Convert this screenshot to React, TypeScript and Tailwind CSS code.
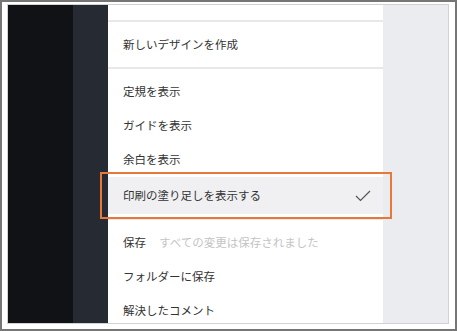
import React from "react";

function Divider() {
  return <div className="h-[2px] shrink-0 bg-[#e8e8ea]" />;
}

function Item({ label, note }: { label: string; note?: string }) {
  return (
    <div className="h-[34px] shrink-0 flex items-center pl-[15px] text-[11.5px] text-[#333]">
      <span>{label}</span>
      {note && <span className="ml-[13px] text-[#c4c4c4]">{note}</span>}
    </div>
  );
}

export default function App() {
  return (
    <div
      className="relative w-[457px] h-[331px] border-2 border-[#767676] bg-white pl-[5px] pt-[2px] pr-[6px] pb-[5px]"
      style={{ fontFamily: '"Noto Sans CJK JP", "Noto Sans", sans-serif' }}
    >
      <div className="flex h-full border border-[#d2d2d4] overflow-hidden">
        {/* Dark side bars */}
        <div className="w-[65px] shrink-0 bg-[#101216]" />
        <div className="w-[35px] shrink-0 bg-[#262b33]" />

        {/* Menu */}
        <div className="w-[275px] shrink-0 bg-white flex flex-col">
          <div className="h-[15px] shrink-0" />
          <Divider />
          <div className="h-[45px] shrink-0 flex items-center pl-[15px] text-[11.5px] text-[#333]">
            新しいデザインを作成
          </div>
          <Divider />
          <div className="h-[6px] shrink-0" />
          <Item label="定規を表示" />
          <Item label="ガイドを表示" />
          <Item label="余白を表示" />
          <div className="h-[37px] shrink-0 flex items-center justify-between pl-[15px] pr-[12px] bg-[#f0f0f2] text-[11.5px] text-[#333]">
            <span>印刷の塗り足しを表示する</span>
            <svg width="16" height="12" viewBox="0 0 16 12" fill="none">
              <polyline
                points="1,6 5.5,10.5 15,1"
                stroke="#555"
                strokeWidth="1.2"
              />
            </svg>
          </div>
          <div className="h-[4px] shrink-0" />
          <Divider />
          <div className="h-[6px] shrink-0" />
          <Item label="保存" note="すべての変更は保存されました" />
          <Item label="フォルダーに保存" />
          <Item label="解決したコメント" />
        </div>

        {/* Right panel */}
        <div className="flex-1 bg-[#ebecef]" />
      </div>

      {/* Highlight annotation */}
      <div className="absolute left-[98px] top-[170px] w-[292px] h-[47px] border-2 border-[#e8773a]" />
    </div>
  );
}
